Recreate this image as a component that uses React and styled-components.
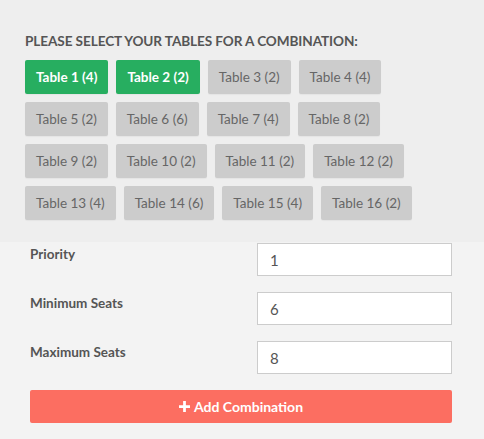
import React from "react";
import styled, { createGlobalStyle } from "styled-components";

const Global = createGlobalStyle`
  html, body { margin: 0; padding: 0; background: #f3f3f3; }
  body { font-family: Lato, "Open Sans", sans-serif; }
  * { box-sizing: border-box; }
`;

const Page = styled.div`
  width: 484px;
  height: 439px;
  background: #f3f3f3;
`;

const TablesPanel = styled.section`
  background: #eeeeee;
  height: 242px;
  padding: 33px 25px 0 25px;
`;

const Heading = styled.h3`
  margin: 0 0 11px 0;
  font-size: 13.6px;
  font-weight: 700;
  color: #555;
  text-transform: uppercase;
  letter-spacing: -0.1px;
  line-height: 16px;
`;

const TableGrid = styled.div`
  display: flex;
  flex-wrap: wrap;
  gap: 8px;
  width: 434px;
`;

const TableButton = styled.button`
  height: 34px;
  padding: 0 11px;
  border: none;
  border-radius: 2px;
  font-family: inherit;
  font-size: 13.5px;
  font-weight: ${(p) => (p.$active ? 700 : 400)};
  background: ${(p) => (p.$active ? "#27ae60" : "#cccccc")};
  color: ${(p) => (p.$active ? "#ffffff" : "#666666")};
  box-shadow: 0 1px 1px rgba(0, 0, 0, 0.04);
  cursor: pointer;
`;

const Form = styled.div`
  padding: 1px 32px 0 30px;
  display: flex;
  flex-direction: column;
  gap: 16px;
`;

const Row = styled.div`
  display: grid;
  grid-template-columns: 227px 1fr;
  align-items: start;
`;

const Label = styled.label`
  font-size: 13.5px;
  font-weight: 700;
  color: #555;
  padding-top: 3px;
`;

const Input = styled.input`
  height: 33px;
  width: 100%;
  border: 1px solid #cccccc;
  background: #fff;
  padding: 0 12px;
  font-family: inherit;
  font-size: 15px;
  color: #555;
  outline: none;
`;

const AddButton = styled.button`
  height: 33px;
  border: none;
  border-radius: 2px;
  background: #fc6e61;
  color: #fff;
  font-family: inherit;
  font-weight: 700;
  font-size: 14px;
  display: flex;
  align-items: center;
  justify-content: center;
  gap: 4px;
  cursor: pointer;
`;

const tables = [
  [1, 4], [2, 2], [3, 2], [4, 4],
  [5, 2], [6, 6], [7, 4], [8, 2],
  [9, 2], [10, 2], [11, 2], [12, 2],
  [13, 4], [14, 6], [15, 4], [16, 2],
];

const Plus = () => (
  <svg width="11" height="11" viewBox="0 0 12 12">
    <path d="M4.5 0h3v4.5H12v3H7.5V12h-3V7.5H0v-3h4.5z" fill="#fff" />
  </svg>
);

export default function App() {
  return (
    <Page>
      <Global />
      <TablesPanel>
        <Heading>Please select your tables for a combination:</Heading>
        <TableGrid>
          {tables.map(([n, s]) => (
            <TableButton key={n} $active={n <= 2}>
              Table {n} ({s})
            </TableButton>
          ))}
        </TableGrid>
      </TablesPanel>
      <Form>
        <Row>
          <Label>Priority</Label>
          <Input defaultValue="1" />
        </Row>
        <Row>
          <Label>Minimum Seats</Label>
          <Input defaultValue="6" />
        </Row>
        <Row>
          <Label>Maximum Seats</Label>
          <Input defaultValue="8" />
        </Row>
        <AddButton>
          <Plus />
          Add Combination
        </AddButton>
      </Form>
    </Page>
  );
}
